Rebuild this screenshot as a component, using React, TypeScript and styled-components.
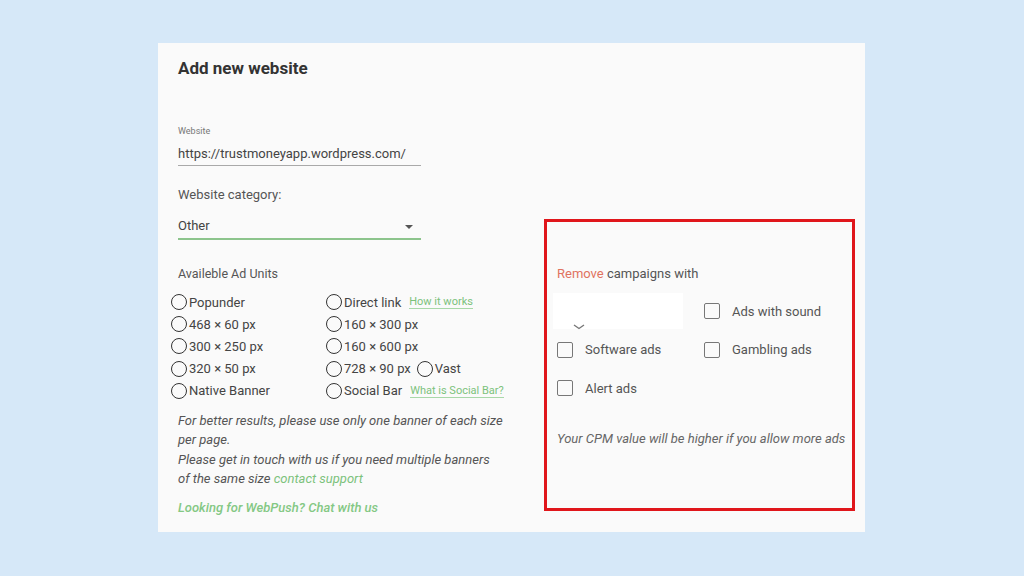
import React from 'react'
import styled, { createGlobalStyle } from 'styled-components'

const GlobalStyle = createGlobalStyle`
    html, body {
        margin: 0;
        padding: 0;
        background: #d6e8f8;
        font-family: Roboto, "Liberation Sans", Arial, sans-serif;
    }
`

const leftUnits = ['Popunder', '468 × 60 px', '300 × 250 px', '320 × 50 px', 'Native Banner']

const App = () => {
    return (
        <Page>
            <GlobalStyle />
            <Card>
                <Title>Add new website</Title>
                <Body>
                    <LeftColumn>
                        <SmallLabel>Website</SmallLabel>
                        <TextInput>https://trustmoneyapp.wordpress.com/</TextInput>
                        <FieldLabel>Website category:</FieldLabel>
                        <Select>
                            <span>Other</span>
                            <Caret />
                        </Select>
                        <SectionLabel>Availeble Ad Units</SectionLabel>
                        <RadioGrid>
                            <RadioCol>
                                {leftUnits.map((u) => (
                                    <RadioRow key={u}>
                                        <Radio />
                                        {u}
                                    </RadioRow>
                                ))}
                            </RadioCol>
                            <RadioCol>
                                <RadioRow>
                                    <Radio />
                                    Direct link
                                    <HelpLink>How it works</HelpLink>
                                </RadioRow>
                                <RadioRow>
                                    <Radio />
                                    160 × 300 px
                                </RadioRow>
                                <RadioRow>
                                    <Radio />
                                    160 × 600 px
                                </RadioRow>
                                <RadioRow>
                                    <Radio />
                                    728 × 90 px
                                    <Radio $spaced />
                                    Vast
                                </RadioRow>
                                <RadioRow>
                                    <Radio />
                                    Social Bar
                                    <HelpLink>What is Social Bar?</HelpLink>
                                </RadioRow>
                            </RadioCol>
                        </RadioGrid>
                        <Note>
                            For better results, please use only one banner of each size
                            <br />
                            per page.
                            <br />
                            Please get in touch with us if you need multiple banners
                            <br />
                            of the same size <GreenText>contact support</GreenText>
                        </Note>
                        <WebPush>Looking for WebPush? Chat with us</WebPush>
                    </LeftColumn>
                    <RightColumn>
                        <RemoveBox>
                            <RemoveTitle>
                                <RedText>Remove</RedText> campaigns with
                            </RemoveTitle>
                            <CheckGrid>
                                <BlankCell>
                                    <BlankField />
                                    <svg width="12" height="6" viewBox="0 0 12 6">
                                        <path d="M1 1 L6 4.5 L11 1" fill="none" stroke="#777" strokeWidth="1.4" />
                                    </svg>
                                </BlankCell>
                                <CheckRow>
                                    <CheckBox />
                                    Ads with sound
                                </CheckRow>
                                <CheckRow>
                                    <CheckBox />
                                    Software ads
                                </CheckRow>
                                <CheckRow>
                                    <CheckBox />
                                    Gambling ads
                                </CheckRow>
                                <CheckRow>
                                    <CheckBox />
                                    Alert ads
                                </CheckRow>
                            </CheckGrid>
                            <CpmNote>Your CPM value will be higher if you allow more ads</CpmNote>
                        </RemoveBox>
                    </RightColumn>
                </Body>
            </Card>
        </Page>
    )
}

export default App

const Page = styled.div`
    width: 1024px;
    height: 576px;
    box-sizing: border-box;
    padding: 43px 0 0 158px;
    overflow: hidden;
`

const Card = styled.div`
    width: 707px;
    height: 489px;
    box-sizing: border-box;
    background: #fafafa;
    padding: 15px 0 0 20px;
    display: flex;
    flex-direction: column;
`

const Title = styled.h2`
    margin: 0;
    height: 20px;
    line-height: 20px;
    font-size: 17px;
    font-weight: 700;
    color: #333;
`

const Body = styled.div`
    display: grid;
    grid-template-columns: 366px 311px;
    margin-top: 47px;
`

const LeftColumn = styled.div`
    display: flex;
    flex-direction: column;
    align-items: flex-start;
    color: #444;
`

const SmallLabel = styled.div`
    font-size: 9px;
    line-height: 12px;
    color: #777;
`

const TextInput = styled.div`
    width: 243px;
    height: 25px;
    margin-top: 4px;
    box-sizing: border-box;
    border-bottom: 1px solid #a9a9a9;
    font-size: 13px;
    line-height: 26px;
    color: #444;
`

const FieldLabel = styled.div`
    margin-top: 21px;
    font-size: 13px;
    line-height: 16px;
    color: #555;
`

const Select = styled.div`
    width: 243px;
    height: 28px;
    margin-top: 9px;
    box-sizing: border-box;
    border-bottom: 2px solid #8cc48c;
    display: flex;
    align-items: center;
    justify-content: space-between;
    font-size: 13px;
    color: #444;
    padding-right: 8px;
`

const Caret = styled.span`
    width: 0;
    height: 0;
    border-left: 4px solid transparent;
    border-right: 4px solid transparent;
    border-top: 4px solid #555;
    margin-top: 3px;
`

const SectionLabel = styled.div`
    margin-top: 26px;
    font-size: 12.5px;
    line-height: 16px;
    color: #555;
`

const RadioGrid = styled.div`
    display: grid;
    grid-template-columns: 155px auto;
    margin-top: 9px;
    margin-left: -7px;
`

const RadioCol = styled.div`
    display: flex;
    flex-direction: column;
`

const RadioRow = styled.div`
    display: flex;
    align-items: center;
    height: 22.2px;
    font-size: 13px;
    color: #444;
    white-space: nowrap;
`

const Radio = styled.span<{ $spaced?: boolean }>`
    width: 16px;
    height: 16px;
    box-sizing: border-box;
    border: 1.7px solid #333;
    border-radius: 50%;
    margin-right: 2px;
    margin-left: ${(p) => (p.$spaced ? '6px' : '0')};
    flex-shrink: 0;
`

const HelpLink = styled.span`
    margin-left: 8px;
    font-size: 11px;
    color: #7cc27c;
    border-bottom: 1px solid #a8d8a8;
    line-height: 13px;
`

const Note = styled.div`
    margin-top: 9px;
    font-size: 13px;
    line-height: 19.4px;
    font-style: italic;
    color: #555;
    white-space: nowrap;
`

const GreenText = styled.span`
    color: #7cc27c;
`

const WebPush = styled.div`
    margin-top: 9px;
    font-size: 13px;
    line-height: 19.5px;
    font-style: italic;
    font-weight: 500;
    color: #84c884;
`

const RightColumn = styled.div`
    padding-top: 94px;
`

const RemoveBox = styled.div`
    width: 311px;
    height: 292px;
    box-sizing: border-box;
    border: 3px solid #e0161b;
    padding: 44px 0 0 10px;
`

const RemoveTitle = styled.div`
    font-size: 13px;
    line-height: 16px;
    color: #555;
`

const RedText = styled.span`
    color: #e0735f;
`

const CheckGrid = styled.div`
    display: grid;
    grid-template-columns: 147px auto;
    grid-auto-rows: 38.5px;
    margin-top: 10px;
`

const BlankCell = styled.div`
    display: flex;
    flex-direction: column;
    align-items: flex-start;
    margin-left: -4px;
    padding-top: 1px;
    svg {
        margin-left: 20px;
        margin-top: -5px;
    }
`

const BlankField = styled.div`
    width: 130px;
    height: 36px;
    background: #fff;
`

const CheckRow = styled.div`
    display: flex;
    align-items: center;
    font-size: 13px;
    color: #555;
    white-space: nowrap;
`

const CheckBox = styled.span`
    width: 16px;
    height: 16px;
    box-sizing: border-box;
    border: 1.5px solid #777;
    border-radius: 2px;
    margin-right: 12px;
`

const CpmNote = styled.div`
    margin-top: 24px;
    font-size: 13px;
    line-height: 14px;
    font-style: italic;
    color: #666;
    white-space: nowrap;
`
